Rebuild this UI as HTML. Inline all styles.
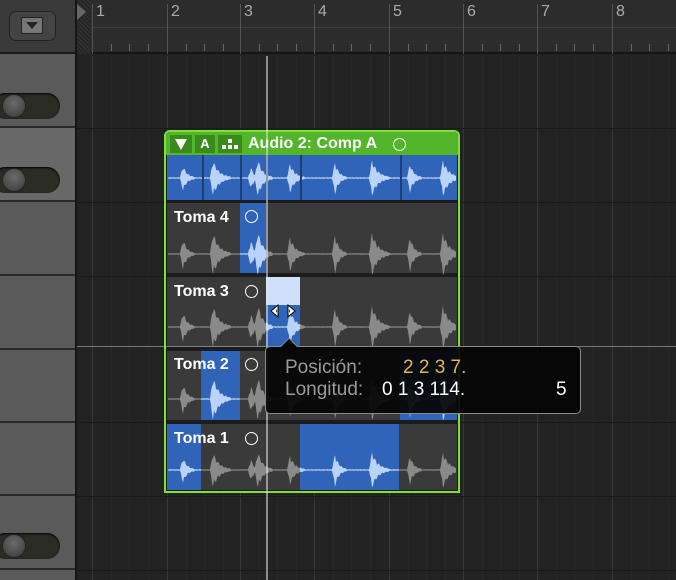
<!DOCTYPE html>
<html><head><meta charset="utf-8"><style>
*{margin:0;padding:0;box-sizing:border-box}
html,body{width:676px;height:580px;overflow:hidden}
body{background:#232323;font-family:"Liberation Sans",sans-serif;position:relative}
.a{position:absolute}
.lrow{position:absolute;left:0;width:75px;background:#5a5a5a;border-bottom:2px solid #2a2a2a}
.tog{position:absolute;left:-8px;width:68px;height:26px;border-radius:13px;background:#2b2d25;box-shadow:inset 0 1px 2px #000}
.knob{position:absolute;left:10px;top:1px;width:24px;height:24px;border-radius:50%;background:radial-gradient(circle at 50% 35%,#6a6a6a,#3a3a3a);border:1px solid #222}
.vl{position:absolute;top:0;width:1px;height:580px;background:#333}
.hl{position:absolute;left:77px;width:599px;height:1px;background:#1a1a1a}
.lbl{position:absolute;color:#fff;font-weight:bold;font-size:16px}
.circ{position:absolute;width:13px;height:13px;border:1.5px solid #fff;border-radius:50%}
</style></head><body>
<div class="a" style="left:0;top:0;width:76px;height:54px;background:#3a3a3a;border-bottom:2px solid #1a1a1a"></div>
<div class="a" style="left:9px;top:11px;width:47px;height:30px;border-radius:7px;background:#444;border:1px solid #222"></div>
<div class="a" style="left:21px;top:17px;width:22px;height:17px;background:#777;border:1px solid #222;border-radius:2px"></div>
<div class="a" style="left:26px;top:22px;width:0;height:0;border-left:6px solid transparent;border-right:6px solid transparent;border-top:7px solid #222"></div>
<div class="lrow" style="top:54px;height:74px"></div>
<div class="lrow" style="top:128px;height:74px;background:#686868"></div>
<div class="lrow" style="top:202px;height:74px"></div>
<div class="lrow" style="top:276px;height:74px"></div>
<div class="lrow" style="top:350px;height:73px"></div>
<div class="lrow" style="top:423px;height:73px"></div>
<div class="lrow" style="top:496px;height:74px"></div>
<div class="lrow" style="top:570px;height:20px"></div>
<div class="tog" style="top:93px"><div class="knob"></div></div>
<div class="tog" style="top:167px"><div class="knob"></div></div>
<div class="tog" style="top:533px"><div class="knob"></div></div>
<div class="a" style="left:75px;top:0;width:2px;height:580px;background:#151515"></div>
<div class="a" style="left:77px;top:0;width:599px;height:54px;background:#2c2c2c;border-bottom:2px solid #151515"></div>
<div class="a" style="left:77px;top:0;width:14px;height:54px;background:repeating-linear-gradient(45deg,#333 0 1px,#262626 1px 3px)"></div>
<div class="a" style="left:77px;top:4px;width:0;height:0;border-top:8px solid transparent;border-bottom:8px solid transparent;border-left:9px solid #666"></div>
<div class="a" style="left:91px;top:27px;width:585px;height:1px;background:#3c3c3c"></div>
<div id="ruler"></div>
<div id="grid"></div>
<div class="hl" style="top:128px"></div><div class="hl" style="top:202px"></div><div class="hl" style="top:276px"></div><div class="hl" style="top:422px"></div><div class="hl" style="top:496px"></div><div class="hl" style="top:570px"></div>
<div class="a" style="left:164px;top:130px;width:296px;height:363px;border:2px solid #7fe03a;border-radius:6px 6px 0 0;background:#1c1c1c"></div>
<div class="a" style="left:166px;top:132px;width:292px;height:23px;background:#53b52a;border-radius:4px 4px 0 0"></div>
<div class="a" style="left:170px;top:135px;width:22px;height:18px;background:#3a8a1c"></div>
<div class="a" style="left:175px;top:139px;width:0;height:0;border-left:6px solid transparent;border-right:6px solid transparent;border-top:11px solid #fff"></div>
<div class="a" style="left:195px;top:135px;width:20px;height:18px;background:#3a8a1c;color:#fff;font-weight:bold;font-size:13px;text-align:center;line-height:18px">A</div>
<div class="a" style="left:218px;top:135px;width:24px;height:18px;background:#3a8a1c"></div>
<div class="a" style="left:228px;top:139px;width:4px;height:4px;background:#fff"></div>
<div class="a" style="left:222px;top:145px;width:4px;height:4px;background:#fff"></div>
<div class="a" style="left:228px;top:145px;width:4px;height:4px;background:#fff"></div>
<div class="a" style="left:234px;top:145px;width:4px;height:4px;background:#fff"></div>
<div class="lbl" style="left:248px;top:135px;font-size:16px">Audio 2: Comp A</div>
<div class="circ" style="left:393px;top:138px"></div>
<div class="a" style="left:167px;top:155px;width:290px;height:45px;background:#2f64b8"></div>
<div class="a" style="left:167px;top:203px;width:290px;height:70px;background:#3a3a3a"></div>
<div class="a" style="left:167px;top:277px;width:290px;height:70px;background:#3a3a3a"></div>
<div class="a" style="left:167px;top:351px;width:290px;height:69px;background:#3a3a3a"></div>
<div class="a" style="left:167px;top:424px;width:290px;height:66px;background:#3a3a3a"></div>
<div class="a" style="left:240px;top:203px;width:26px;height:70px;background:#2f64b8"></div>
<div class="a" style="left:266px;top:277px;width:34px;height:70px;background:#2f64b8"></div>
<div class="a" style="left:266px;top:277px;width:34px;height:28px;background:#cfe0fb"></div>
<div class="a" style="left:201px;top:351px;width:39px;height:69px;background:#2f64b8"></div>
<div class="a" style="left:400px;top:351px;width:57px;height:69px;background:#2f64b8"></div>
<div class="a" style="left:167px;top:424px;width:34px;height:66px;background:#2f64b8"></div>
<div class="a" style="left:300px;top:424px;width:99px;height:66px;background:#2f64b8"></div>
<svg class="a" id="wv" style="left:0;top:0" width="676" height="580"></svg>
<div class="lbl" style="left:174px;top:209px">Toma 4</div><div class="circ" style="left:245px;top:210px"></div>
<div class="lbl" style="left:174px;top:283px">Toma 3</div><div class="circ" style="left:245px;top:285px"></div>
<div class="lbl" style="left:174px;top:356px">Toma 2</div><div class="circ" style="left:245px;top:358px"></div>
<div class="lbl" style="left:174px;top:430px">Toma 1</div><div class="circ" style="left:245px;top:432px"></div>
<svg class="a" style="left:268px;top:303px" width="30" height="16"><path d="M3 8 L10 2 V14Z" fill="#fff" stroke="#000"/><path d="M27 8 L20 2 V14Z" fill="#fff" stroke="#000"/><path d="M8 8 L9 6 V10Z" fill="#000"/><path d="M22 8 L21 6 V10Z" fill="#000"/></svg>
<div class="a" style="left:266px;top:56px;width:2px;height:524px;background:rgba(230,230,230,.55)"></div>
<div class="a" style="left:77px;top:346px;width:599px;height:1px;background:rgba(200,200,200,.5)"></div>
<div class="a" style="left:265px;top:346px;width:316px;height:68px;background:rgba(5,5,5,.93);border:1px solid #8a8a8a;border-radius:5px"></div>
<div class="a" style="left:283px;top:340px;width:12px;height:12px;background:#050505;border-left:1px solid #8a8a8a;border-top:1px solid #8a8a8a;transform:rotate(45deg)"></div>
<div class="a" style="left:285px;top:357px;color:#9a9a9a;font-size:19px">Posición:</div>
<div class="a" style="left:285px;top:379px;color:#9a9a9a;font-size:19px">Longitud:</div>
<div class="a" style="left:403px;top:357px;color:#e0b84e;font-size:19px;letter-spacing:0px">2 2 3 7.</div>
<div class="a" style="left:382px;top:379px;color:#fff;font-size:19px">0 1 3 114.</div>
<div class="a" style="left:556px;top:379px;color:#fff;font-size:19px">5</div>
<script>
var bars=[92,167,240,314,389,463,537,612];
var r='',g='';
bars.forEach(function(x,i){
 r+='<div class="a" style="left:'+x+'px;top:4px;width:1px;height:50px;background:#555"></div><div class="a" style="left:'+(x+4)+'px;top:3px;color:#aaa;font-size:16px">'+(i+1)+'</div>';
 for(var k=1;k<4;k++)r+='<div class="a" style="left:'+(x+k*18.5)+'px;top:44px;width:1px;height:7px;background:#666"></div>';
 g+='<div class="vl" style="left:'+x+'px;top:56px;height:524px;background:#383838"></div>';
 for(var k=1;k<4;k++)g+='<div class="vl" style="left:'+(x+k*18.5)+'px;top:56px;height:524px;background:#282828"></div>';
});
document.getElementById('ruler').innerHTML=r;document.getElementById('grid').innerHTML=g;
var svg=document.getElementById('wv'),s='';
var bursts=[[183,4,.7],[213,6,1],[251,3,.6],[258,5,1],[290,5,.8],[335,4,.9],[372,6,1],[410,4,.8],[443,6,1]];
function amp(x,A,ph){
 var a=0.7;
 bursts.forEach(function(b){var d=x-b[0];if(d>-3&&d<b[1]*3){a+=A*b[2]*(d<0?(1+d/3):Math.exp(-d/b[1]))}});
 return a*(0.55+0.45*Math.abs(Math.sin(x*2.3+ph)));
}
function wave(cy,x0,x1,col,A){
 var p='M'+x0+' '+cy;
 for(var x=x0;x<=x1;x+=1)p+=' L'+x+' '+(cy-amp(x,A,0)).toFixed(1);
 for(var x=x1;x>=x0;x-=1)p+=' L'+x+' '+(cy+amp(x,A,1.1)).toFixed(1);
 return '<path d="'+p+'Z" fill="'+col+'"/>';
}
function lane(cy,A,blues){
 s+=wave(cy,168,456,'#8a8a8a',A);
 blues.forEach(function(b){s+='<clipPath id="c'+cy+b[0]+'"><rect x="'+b[0]+'" y="0" width="'+(b[1]-b[0])+'" height="580"/></clipPath><g clip-path="url(#c'+cy+b[0]+')">'+wave(cy,168,456,'#b9d3fb',A)+'</g>'});
}
lane(178,18,[[167,457]]);
lane(254,22,[[240,266]]);
lane(327,22,[[266,300]]);
lane(399,22,[[201,240],[400,457]]);
lane(470,18,[[167,201],[300,399]]);
[202,240,266,300,400].forEach(function(x){s+='<rect x="'+x+'" y="155" width="2" height="45" fill="#1f3f75"/>'});
svg.innerHTML=s;
</script>
</body></html>
